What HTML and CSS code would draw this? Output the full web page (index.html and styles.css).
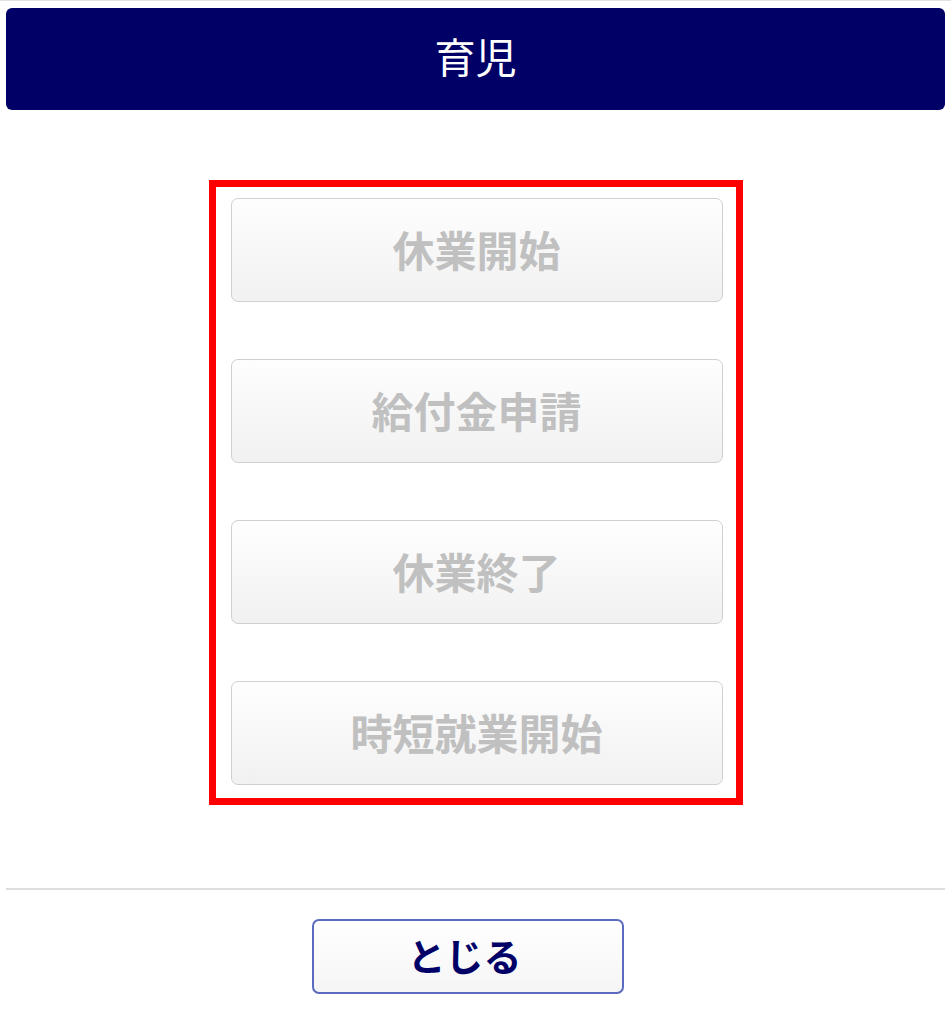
FILE: index.html
```html
<!DOCTYPE html>
<html lang="ja">
<head>
    <meta charset="UTF-8">
    <title>育児</title>
    <link rel="stylesheet" href="styles.css">
</head>
<body>
    <div class="page">
        <h1 class="header">育児</h1>
        <div class="menu">
            <button class="menu-btn" disabled>休業開始</button>
            <button class="menu-btn" disabled>給付金申請</button>
            <button class="menu-btn" disabled>休業終了</button>
            <button class="menu-btn" disabled>時短就業開始</button>
        </div>
        <div class="footer">
            <button class="close-btn">とじる</button>
        </div>
    </div>
</body>
</html>
```

FILE: styles.css
```css
body { margin: 0; border-top: 1px solid #e2e2e2; background: #fff; font-family: "Noto Sans CJK JP", "Noto Sans", sans-serif; }
.page { padding: 7px 6px 0 6px; }
.header {
    margin: 0; height: 102px; line-height: 94px; background: #000066; color: #fff;
    border-radius: 6px; text-align: center; font-size: 41px; font-weight: normal;
}
.menu {
    margin: 70px auto 0; padding: 11px 13px 13px 15px; border: 7px solid #ff0000;
    display: flex; flex-direction: column; gap: 57px; box-sizing: border-box; width: 534px;
}
.menu-btn {
    height: 104px; border: 1px solid #d0d0d0; border-radius: 7px;
    background: linear-gradient(#fefefe, #f1f1f1); color: #c0c0c0;
    font-family: inherit; font-size: 42px; font-weight: bold; padding: 0 0 4px;
}
.footer { margin-top: 83px; border-top: 2px solid #dedede; padding: 29px 16px 0 0; display: flex; justify-content: center; }
.close-btn {
    width: 312px; height: 75px; border: 2px solid #5b6bbf; border-radius: 7px;
    background: linear-gradient(#ffffff, #f5f5f5); color: #000066;
    font-family: inherit; font-size: 38px; font-weight: bold; padding: 0 6px 4px 0; cursor: pointer;
}
```
